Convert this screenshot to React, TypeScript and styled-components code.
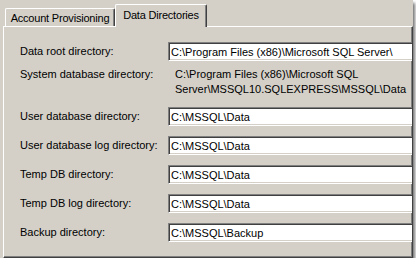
import styled, { createGlobalStyle } from "styled-components";

const GlobalStyle = createGlobalStyle`
  html, body {
    margin: 0;
    padding: 0;
    background: #ffffff;
  }
  body {
    font-family: "Liberation Sans", Arial, sans-serif;
    font-size: 11px;
    color: #000;
  }
`;

const rows: { label: string; value: string; multiline?: boolean }[] = [
  { label: "Data root directory:", value: "C:\\Program Files (x86)\\Microsoft SQL Server\\" },
  {
    label: "System database directory:",
    value: "C:\\Program Files (x86)\\Microsoft SQL\nServer\\MSSQL10.SQLEXPRESS\\MSSQL\\Data",
    multiline: true,
  },
  { label: "User database directory:", value: "C:\\MSSQL\\Data" },
  { label: "User database log directory:", value: "C:\\MSSQL\\Data" },
  { label: "Temp DB directory:", value: "C:\\MSSQL\\Data" },
  { label: "Temp DB log directory:", value: "C:\\MSSQL\\Data" },
  { label: "Backup directory:", value: "C:\\MSSQL\\Backup" },
];

export default function App() {
  return (
    <>
      <GlobalStyle />
      <Frame>
        <TabStrip>
          <Tab $width={110}>Account Provisioning</Tab>
          <Tab $width={92} $active>
            Data Directories
          </Tab>
        </TabStrip>
        <Panel>
          {rows.map((r) => (
            <Row key={r.label} $multiline={r.multiline}>
              <Label>{r.label}</Label>
              {r.multiline ? (
                <StaticValue>{r.value}</StaticValue>
              ) : (
                <Field readOnly defaultValue={r.value} />
              )}
            </Row>
          ))}
        </Panel>
      </Frame>
    </>
  );
}

const Frame = styled.div`
  width: 413px;
  height: 258px;
  box-sizing: border-box;
  padding: 4px 0 0 3px;
  background: #d4d0c8;
  box-shadow: 2px 3px 3px rgba(0, 0, 0, 0.55);
  display: flex;
  flex-direction: column;
  overflow: hidden;
`;

const TabStrip = styled.div`
  display: flex;
  align-items: flex-end;
  height: 22px;
  padding-left: 2px;
  position: relative;
  z-index: 2;
`;

const Tab = styled.div<{ $active?: boolean; $width: number }>`
  box-sizing: border-box;
  width: ${(p) => p.$width}px;
  height: ${(p) => (p.$active ? "23px" : "18px")};
  margin-bottom: ${(p) => (p.$active ? "-1px" : "0")};
  padding-top: ${(p) => (p.$active ? "3px" : "2px")};
  text-align: center;
  background: #d4d0c8;
  border-top: 1px solid #ffffff;
  border-left: 1px solid #ffffff;
  border-right: 1px solid #404040;
  box-shadow: inset -1px 0 0 #808080;
  border-radius: 2px 2px 0 0;
  white-space: nowrap;
  line-height: 14px;
  letter-spacing: -0.2px;
`;

const Panel = styled.div`
  flex: 1;
  box-sizing: border-box;
  background: #d4d0c8;
  border-top: 1px solid #ffffff;
  border-left: 1px solid #ffffff;
  border-right: 1px solid #404040;
  border-bottom: 1px solid #404040;
  box-shadow: inset -1px -1px 0 #808080;
  padding: 15px 0 0 16px;
  display: flex;
  flex-direction: column;
  gap: 10px;
  overflow: hidden;
`;

const Row = styled.div<{ $multiline?: boolean }>`
  display: grid;
  grid-template-columns: 148px 1fr;
  align-items: ${(p) => (p.$multiline ? "start" : "center")};
  margin-top: ${(p) => (p.$multiline ? "-4px" : "0")};
`;

const Label = styled.span`
  white-space: nowrap;
  line-height: 15px;
`;

const StaticValue = styled.div`
  padding-left: 7px;
  white-space: pre-line;
  line-height: 15px;
`;

const Field = styled.input`
  box-sizing: border-box;
  width: calc(100% + 4px);
  height: 19px;
  margin: 0;
  padding: 0 0 0 2px;
  font: inherit;
  color: #000;
  background: #ffffff;
  border-style: solid;
  border-width: 1px;
  border-color: #808080 #ffffff #ffffff #808080;
  box-shadow: inset 1px 1px 0 #404040, inset -1px -1px 0 #d4d0c8;
  outline: none;
`;
